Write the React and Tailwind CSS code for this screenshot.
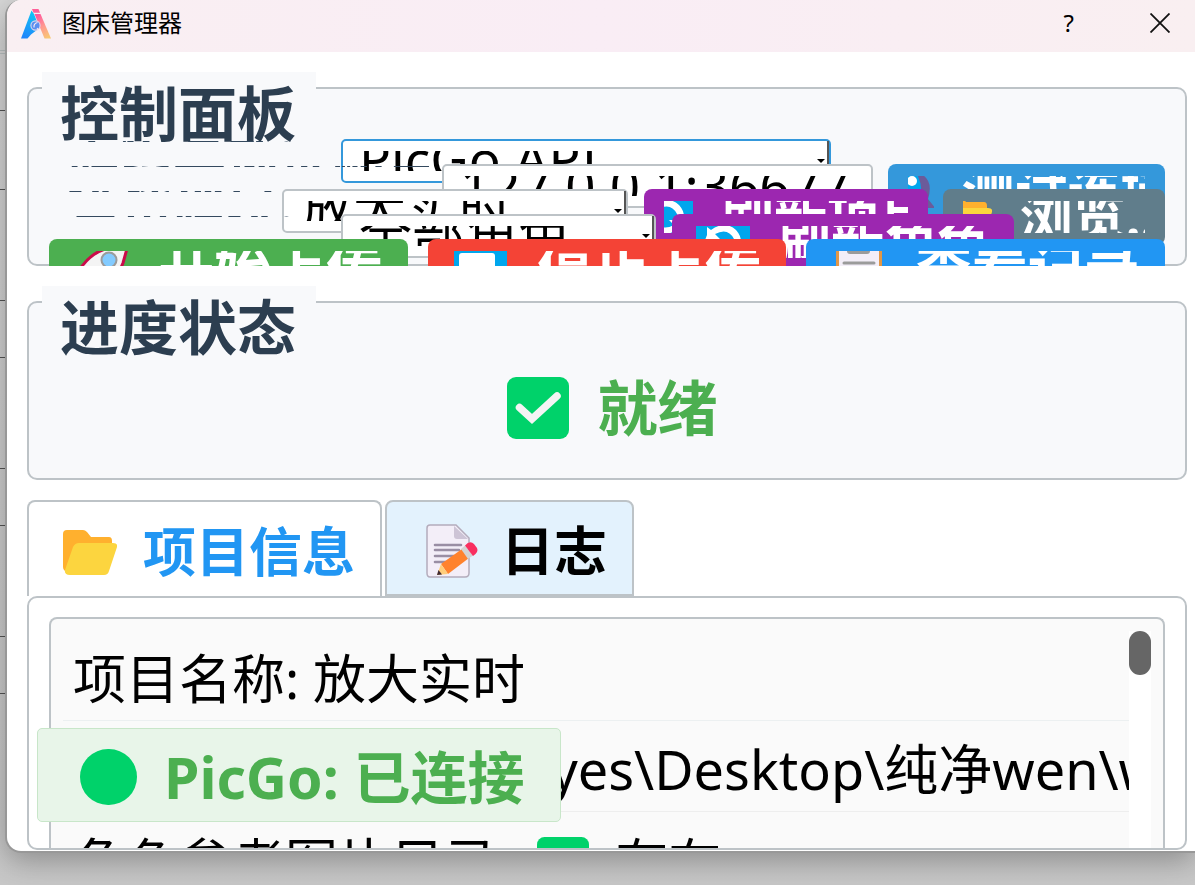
const FONT = "font-['Noto_Sans','Noto_Sans_CJK_SC',sans-serif]";

function Logo() {
  return (
    <svg viewBox="0 0 30 31" className="h-[31px] w-[30px] shrink-0" aria-hidden="true">
      <defs>
        <linearGradient id="lg-blue" x1="0.6" y1="0" x2="0.3" y2="1">
          <stop offset="0" stopColor="#12c6f5" />
          <stop offset="1" stopColor="#1f86fb" />
        </linearGradient>
        <linearGradient id="lg-pink" x1="0.3" y1="0" x2="0.8" y2="1">
          <stop offset="0" stopColor="#ff5a9e" />
          <stop offset="0.5" stopColor="#ff9a8f" />
          <stop offset="1" stopColor="#f8c872" />
        </linearGradient>
      </defs>
      <path d="M10.500 2.500 L0 30.500 H6.500 L10 26.500 L18.500 20 L13 6 Z" fill="url(#lg-blue)" />
      <path d="M11 1 H17.500 L19 4.800 H12.500 Z" fill="#ff5f98" />
      <path d="M13.500 6 H19.500 L30 30.500 H23.500 Z" fill="url(#lg-pink)" />
      <circle cx="14.500" cy="17.500" r="4.600" fill="#5b8ff0" stroke="#e3d6ea" strokeWidth="1.100" />
      <path d="M16.500 14.500 q-4 1 -3.500 5 M16 20 l2.800 3.500" fill="none" stroke="#f4e9f2" strokeWidth="1.200" />
    </svg>
  );
}

function FolderIcon({ className }) {
  return (
    <svg viewBox="0 0 54 54" className={className} aria-hidden="true">
      <path d="M4 5 H20 Q22 5 24 7 L28 12 H46 Q49 12 49 16 V30 L6 48 Q0 46 0 42 V9 Q0 5 4 5 Z" fill="#ffb02e" />
      <path d="M16 18 H50 Q55 18 54 22 L46 46 Q45 50 41 50 H7 Q1 50 2 45 L10 22 Q12 18 16 18 Z" fill="#fcd53f" />
    </svg>
  );
}

function MemoIcon({ className }) {
  return (
    <svg viewBox="0 0 54 54" className={className} aria-hidden="true">
      <path d="M4 1 H30 L43 14 V49 Q43 53 39 53 H4 Q1 53 1 49 V4 Q1 1 4 1 Z" fill="#f3eef8" stroke="#b4acbc" strokeWidth="1.500" />
      <path d="M28 2 L42 15 H31 Q28 15 28 12 Z" fill="#cdc4d6" />
      <path d="M9 21 H35 M9 26 H33 M9 32 H28 M9 38 H20" stroke="#998ea4" strokeWidth="2.600" strokeLinecap="round" />
      <path d="M15 40 L36 25 L43 34 L22 50 Z" fill="#ff822d" />
      <path d="M15 40 L22 50 L11 51 Z" fill="#ffce7c" />
      <path d="M12.500 46 L16 50.500 L11 51 Z" fill="#402a32" />
      <path d="M35 25 L39 21.500 L47 31.500 L42 35 Z" fill="#d3d3d3" />
      <path d="M39 21.500 Q44 16 48 20 L51 24 Q53 28 47 32 Z" fill="#f92f60" />
    </svg>
  );
}

function CheckIcon({ className }) {
  return (
    <svg viewBox="0 0 62 62" className={className} aria-hidden="true">
      <rect width="62" height="62" rx="9" fill="#00d26a" />
      <path d="M12.500 30.500 L25 42 L50 19" fill="none" stroke="#f4f4f4" strokeWidth="7.500" strokeLinecap="round" />
    </svg>
  );
}

function RefreshIcon({ className }) {
  return (
    <svg viewBox="0 0 54 54" className={className} aria-hidden="true">
      <rect width="54" height="54" rx="4" fill="#00a6ed" />
      <path d="M11 12 V24 H24 L19 19 Q32 12 38 24 Q39 28 37 31 L43 34 Q48 24 40 15 Q29 5 15 15 Z" fill="#fff" />
      <path d="M43 42 V30 H30 L35 35 Q22 42 16 30 Q15 26 17 23 L11 20 Q6 30 14 39 Q25 49 39 39 Z" fill="#fff" />
    </svg>
  );
}

function PlugIcon({ className }) {
  return (
    <svg viewBox="0 0 54 54" className={className} aria-hidden="true">
      <path d="M28 6 Q56 8 48 34 L56 44 H46 L38 34 Q46 16 28 12 Z" fill="#6b5b9a" />
      <path d="M10 4 H34 Q46 22 38 38 H10 Z" fill="#00a6ed" />
      <ellipse cx="32" cy="16" rx="5" ry="5" fill="#fff" />
    </svg>
  );
}

function RocketIcon({ className }) {
  return (
    <svg viewBox="0 0 56 56" className={className} aria-hidden="true">
      <path d="M6 30 Q18 12 36 9 L54 6 L49 24 Q42 42 22 50 Z" fill="#f4f4f4" stroke="#ca0b4a" strokeWidth="3" />
      <circle cx="35" cy="21" r="7.500" fill="#83cbff" stroke="#9b9b9b" strokeWidth="2" />
    </svg>
  );
}

function StopIcon({ className }) {
  return (
    <svg viewBox="0 0 56 56" className={className} aria-hidden="true">
      <rect x="1" width="53" height="56" rx="4" fill="#00a6ed" />
      <rect x="6" y="14" width="36" height="30" rx="3" fill="#fff" />
    </svg>
  );
}

function ClipboardIcon({ className }) {
  return (
    <svg viewBox="0 0 56 56" className={className} aria-hidden="true">
      <rect x="4" y="4" width="46" height="50" rx="4" fill="#e19747" />
      <rect x="7" y="8" width="40" height="44" fill="#f3eef8" />
      <path d="M15 6 H38 V12 Q38 15 35 15 H18 Q15 15 15 12 Z" fill="#9b9b9b" />
      <path d="M12 24 H42 M12 34 H42" stroke="#9b9b9b" strokeWidth="3" strokeLinecap="round" />
    </svg>
  );
}

function Label({ htmlFor, className, children }) {
  return (
    <label
      htmlFor={htmlFor}
      className={`relative z-10 mt-[2px] flex h-px shrink-0 items-center overflow-visible whitespace-nowrap font-bold text-[#34495e] ${className}`}
    >
      <span className="flex h-px items-center overflow-hidden text-[53px] leading-[60px]">{children}</span>
    </label>
  );
}

function Combo({ id, value, className }) {
  return (
    <div className={`flex h-11 items-center rounded-[5px] border-2 bg-white pl-4 ${className}`}>
      <div className="flex h-5 min-w-0 flex-1 items-center overflow-hidden">
        <select
          id={id}
          defaultValue={value}
          className="h-[72px] w-full shrink-0 appearance-none bg-transparent pb-1 text-[53px] leading-[68px] text-black outline-none"
        >
          <option>{value}</option>
        </select>
      </div>
      <div className="flex h-full w-3 shrink-0 items-center justify-start border-r-2 border-[#555]">
        <svg viewBox="0 0 8 4" className="h-1 w-2" aria-hidden="true">
          <path d="M0 0 H8 L4 4 Z" fill="#000" />
        </svg>
      </div>
    </div>
  );
}

function ActionButton({ icon: Icon, className, large, children }) {
  return (
    <button type="button" className={`h-14 rounded-lg px-5 py-3 font-bold text-white ${className}`}>
      <span className="flex h-8 items-center justify-center overflow-hidden whitespace-nowrap">
        <Icon className={large ? "mr-[28px] size-[56px] shrink-0" : "mr-[28px] size-[54px] shrink-0"} />
        <span className={large ? "text-[56px] leading-[80px]" : "text-[53px] leading-[80px]"}>{children}</span>
      </span>
    </button>
  );
}

function GroupBox({ title, children }) {
  return (
    <section className="relative h-[179px] shrink-0 rounded-[10px] border-2 border-[#bdc3c7] bg-[#f8f9fb]">
      <h2 className="absolute -top-[17px] left-[13px] h-[71px] overflow-hidden bg-[#f8f9fb] pr-5 pl-[18px] text-[59px] leading-[82px] font-bold whitespace-nowrap text-[#2c3e50]">
        {title}
      </h2>
      {children}
    </section>
  );
}

function ControlPanel() {
  return (
    <GroupBox title="控制面板">
      <div className="relative flex h-[177px] flex-col overflow-hidden px-5 pt-[50px]">
        <div className="flex h-[25px] shrink-0 items-start">
          <Label htmlFor="method" className="w-[292px] pl-[18px]">上传方式:</Label>
          <Combo id="method" value="PicGo API" className="w-[490px] border-[#3498db]" />
        </div>
        <div className="relative flex h-[25px] shrink-0 items-start">
          <Label htmlFor="server" className="w-[393px] pl-[18px]">服务器地址配置:</Label>
          <div className="flex h-11 min-w-0 flex-1 items-center rounded-[5px] border-2 border-[#bdc3c7] bg-white pr-4 pl-4">
            <div className="flex h-5 w-full items-center overflow-hidden">
              <input
                id="server"
                defaultValue="127.0.0.1:36677"
                className="h-[72px] w-full shrink-0 bg-transparent text-[53px] leading-[72px] text-black outline-none"
              />
            </div>
          </div>
          <ActionButton icon={PlugIcon} className="ml-[15px] w-[277px] bg-[#3498db]">测试连接</ActionButton>
        </div>
        <div className="relative flex h-[25px] shrink-0 items-start">
          <Label htmlFor="project" className="w-[233px] pl-[18px]">选择项目:</Label>
          <Combo id="project" value="放大实时" className="w-[346px] border-[#bdc3c7]" />
          <ActionButton icon={RefreshIcon} className="ml-4 w-[284px] bg-[#9c27b0]">刷新项目</ActionButton>
          <ActionButton icon={FolderIcon} className="ml-[15px] min-w-0 flex-1 bg-[#607d8b]">浏览...</ActionButton>
        </div>
        <div className="relative flex h-[25px] shrink-0 items-start">
          <Label htmlFor="role" className="w-[292px] pl-[18px]">角色筛选:</Label>
          <Combo id="role" value="全部角色" className="w-[315px] border-[#bdc3c7]" />
          <ActionButton icon={RefreshIcon} className="ml-4 w-[342px] bg-[#9c27b0]">刷新角色</ActionButton>
        </div>
        <div className="relative grid h-14 shrink-0 grid-cols-3 gap-5">
          <ActionButton large icon={RocketIcon} className="bg-[#4caf50]">开始上传</ActionButton>
          <ActionButton large icon={StopIcon} className="bg-[#f44336]">停止上传</ActionButton>
          <ActionButton large icon={ClipboardIcon} className="bg-[#2196f3]">查看记录</ActionButton>
        </div>
      </div>
    </GroupBox>
  );
}

function ProgressPanel() {
  return (
    <GroupBox title="进度状态">
      <div className="flex h-full items-center justify-center gap-[29px] pt-[34px] pl-[10px]">
        <CheckIcon className="size-[62px]" />
        <span className="text-[60px] leading-[72px] font-bold text-[#4caf50]">就绪</span>
      </div>
    </GroupBox>
  );
}

function ProjectList() {
  return (
    <div className="flex min-h-0 flex-1 overflow-hidden rounded-[10px] border-2 border-[#bdc3c7] bg-white px-5 pt-[19px]">
      <div className="flex min-w-0 flex-1 rounded-t-lg border-2 border-b-0 border-[#bdc3c7] bg-[#fafafa] px-3 pt-3">
        <ul className="min-w-0 flex-1 overflow-hidden text-[53px] leading-[90px] whitespace-nowrap text-black">
          <li className="h-[90px] overflow-hidden border-b border-[#ecf0f1] pt-[3px] pl-[10px]">项目名称: 放大实时</li>
          <li className="h-[91px] overflow-hidden border-b border-[#eeeeee] pt-[3px] pl-[10px] text-[54px]">
            项目路径: C:\Users\yes\Desktop\纯净wen\wen
          </li>
          <li className="flex h-[91px] items-center pt-[10px] pl-[10px]">
            角色参考图片目录:
            <CheckIcon className="mr-[26px] ml-[26px] size-[52px]" />
            存在
          </li>
        </ul>
        <div className="w-[22px] shrink-0 bg-white">
          <div className="h-11 rounded-full bg-[#666666]" />
        </div>
      </div>
    </div>
  );
}

export default function App() {
  return (
    <div className={`relative h-screen overflow-hidden bg-linear-to-b from-[#d8d8d8] to-[#c8c8c8] pl-[5px] ${FONT}`}>
      <div className="absolute inset-y-0 left-0 w-[7px]">
        <div className="absolute top-[50px] h-[4px] w-full border-y border-[#b9c1c1]" />
        {[110, 189, 300, 357, 468, 525, 636, 693].map((y) => (
          <div key={y} className="absolute h-px w-full bg-[#555]" style={{ top: y }} />
        ))}
      </div>
      <div className="relative flex h-[calc(100vh-32px)] flex-col overflow-hidden rounded-l-[16px] border-b-2 border-l-2 border-[#989898] bg-white shadow-[0_8px_30px_rgba(0,0,0,0.3)]">
        <header className="flex h-[52px] shrink-0 items-center bg-linear-to-r from-[#f9eff2] via-[#f9edf5] to-[#f9eff1] pr-[25px] pb-[6px] pl-[14px]">
          <Logo />
          <h1 className="ml-[11px] flex-1 text-[24px] leading-8 text-black">图床管理器</h1>
          <button type="button" aria-label="帮助" className="mr-[76px] text-[24px] leading-8 text-black">?</button>
          <button type="button" aria-label="关闭" className="size-5">
            <svg viewBox="0 0 20 20" className="size-5" aria-hidden="true">
              <path d="M0.500 0.500 L19.500 19.500 M19.500 0.500 L0.500 19.500" stroke="#111" strokeWidth="1.800" />
            </svg>
          </button>
        </header>
        <main className="flex min-h-0 flex-1 flex-col pt-[35px] pr-2 pb-px pl-5">
          <ControlPanel />
          <div className="h-[35px] shrink-0" />
          <ProgressPanel />
          <div role="tablist" className="mt-5 flex shrink-0 gap-[3px] text-[53px] leading-[72px] font-bold">
            <button
              type="button"
              role="tab"
              aria-selected="true"
              className="flex h-[96px] items-center rounded-t-lg border-2 border-b-0 border-[#bdc3c7] bg-white pt-[6px] pr-[25px] pl-[34px] text-[#2196f3]"
            >
              <FolderIcon className="mr-[26px] size-[54px]" />
              项目信息
            </button>
            <button
              type="button"
              role="tab"
              aria-selected="false"
              className="flex h-[96px] items-center rounded-t-lg border-2 border-[#bdc3c7] bg-[#e3f2fd] pt-[6px] pr-[25px] pl-[39px] text-black"
            >
              <MemoIcon className="mr-[21px] size-[54px]" />
              日志
            </button>
          </div>
          <ProjectList />
        </main>
        <div
          role="status"
          className="absolute bottom-[29px] left-[30px] flex h-[94px] w-[524px] items-center rounded-[5px] border border-[#c8e6c9] bg-[#e8f5e9] pt-1 pl-[42px] text-[57px] leading-[72px] font-bold whitespace-nowrap text-[#4caf50]"
        >
          <span className="mr-[27px] h-14 w-[57px] shrink-0 rounded-full bg-[#00d26a]" />
          PicGo: 已连接
        </div>
      </div>
    </div>
  );
}
